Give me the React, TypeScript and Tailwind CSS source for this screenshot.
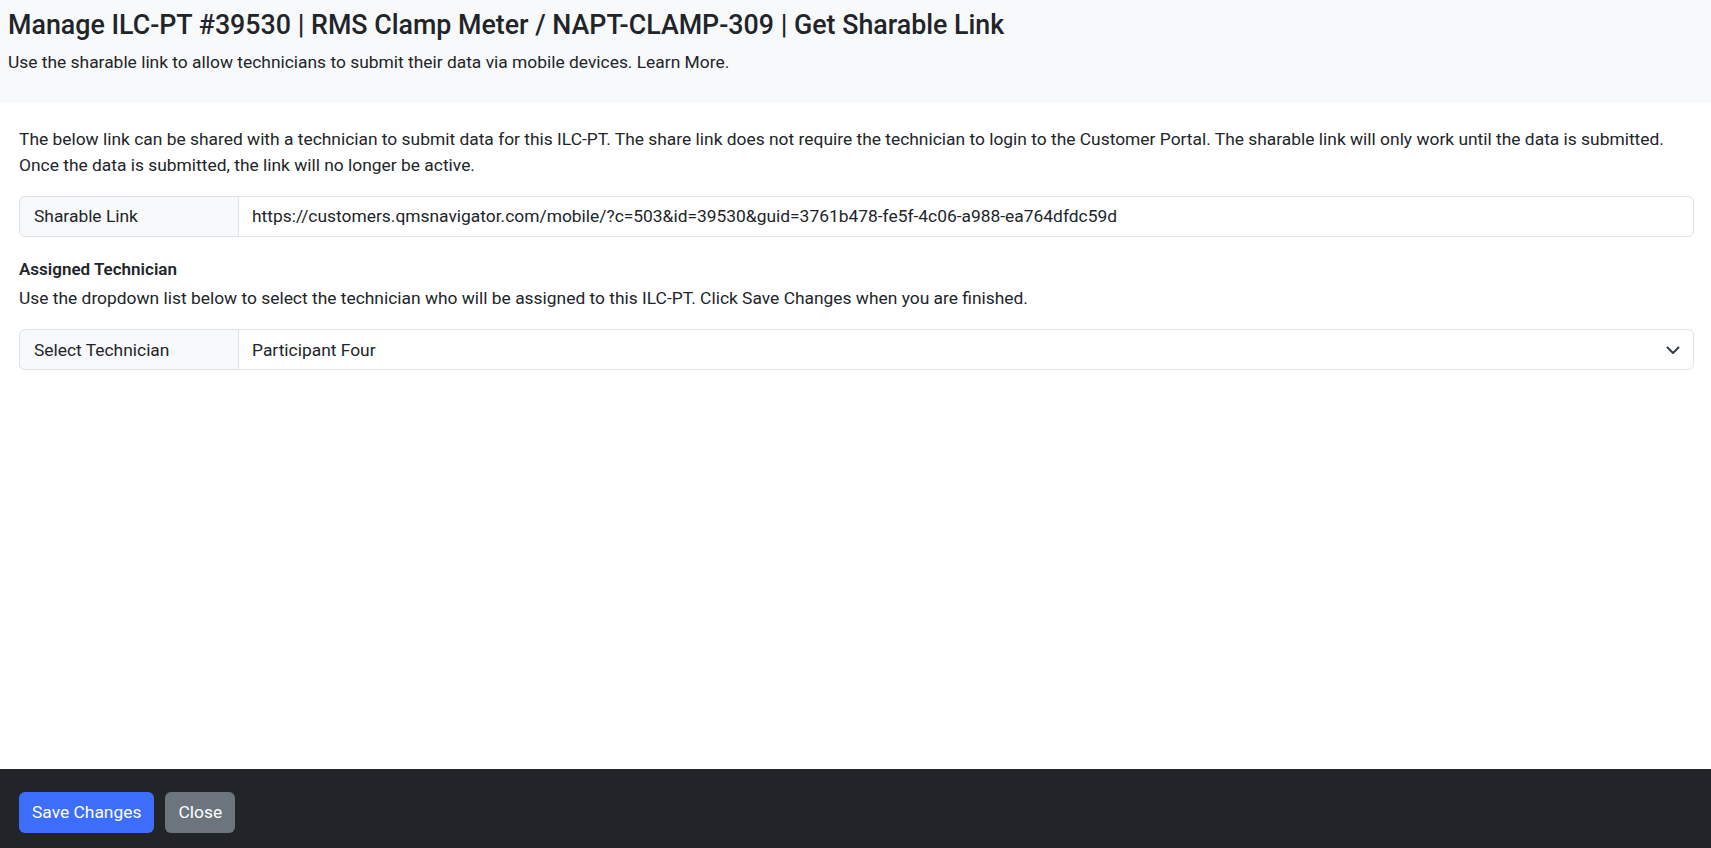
const sharableLink =
  "https://customers.qmsnavigator.com/mobile/?c=503&id=39530&guid=3761b478-fe5f-4c06-a988-ea764dfdc59d";

const InputGroup = ({ label, children }: { label: string; children: React.ReactNode }) => (
  <div className="flex h-[41px] w-full">
    <div className="flex items-center w-[220px] shrink-0 px-[14px] bg-[#f8f9fa] border border-[#dee2e6] rounded-l-[6px]">
      {label}
    </div>
    <div className="flex items-center flex-1 -ml-px px-[13px] bg-white border border-[#dee2e6] rounded-r-[6px]">
      {children}
    </div>
  </div>
);

export default function App() {
  return (
    <div className="flex flex-col h-screen text-[17.4px] leading-[26.4px] text-[#212529] font-['Roboto',sans-serif]">
      <header className="h-[103px] shrink-0 bg-[#f8f9fa] px-2 pt-[8px]">
        <h1 className="text-[26.8px] leading-[34px] font-medium">
          Manage ILC-PT #39530 | RMS Clamp Meter / NAPT-CLAMP-309 | Get Sharable Link
        </h1>
        <p className="mt-[7px] text-[17.4px] leading-[26px]">
          Use the sharable link to allow technicians to submit their data via mobile devices. Learn More.
        </p>
      </header>

      <main className="flex-1 pl-[19px] pr-[17px] pt-[23px]">
        <p className="mb-[17px]">
          The below link can be shared with a technician to submit data for this ILC-PT. The share link does not
          require the technician to login to the Customer Portal. The sharable link will only work until the data is
          submitted. Once the data is submitted, the link will no longer be active.
        </p>

        <InputGroup label="Sharable Link">
          <span className="whitespace-nowrap">{sharableLink}</span>
        </InputGroup>

        <h2 className="mt-[20px] text-[17px] leading-[24px] font-semibold">Assigned Technician</h2>
        <p className="mt-[4px] mb-[18px]">
          Use the dropdown list below to select the technician who will be assigned to this ILC-PT. Click Save Changes
          when you are finished.
        </p>

        <InputGroup label="Select Technician">
          <div className="flex items-center justify-between w-full">
            <span>Participant Four</span>
            <svg width="14" height="14" viewBox="0 0 14 14" fill="none">
              <path d="M1.5 4.5L7 10l5.5-5.5" stroke="#343a40" strokeWidth="1.9" strokeLinecap="round" strokeLinejoin="round" />
            </svg>
          </div>
        </InputGroup>
      </main>

      <footer className="h-[79px] shrink-0 bg-[#212529] flex items-start gap-[11px] pl-[19px] pt-[23px]">
        <button className="h-[41px] px-[13px] rounded-[6px] bg-[#3d6efb] text-white">Save Changes</button>
        <button className="h-[41px] px-[13px] rounded-[6px] bg-[#6c757d] text-white">Close</button>
      </footer>
    </div>
  );
}
